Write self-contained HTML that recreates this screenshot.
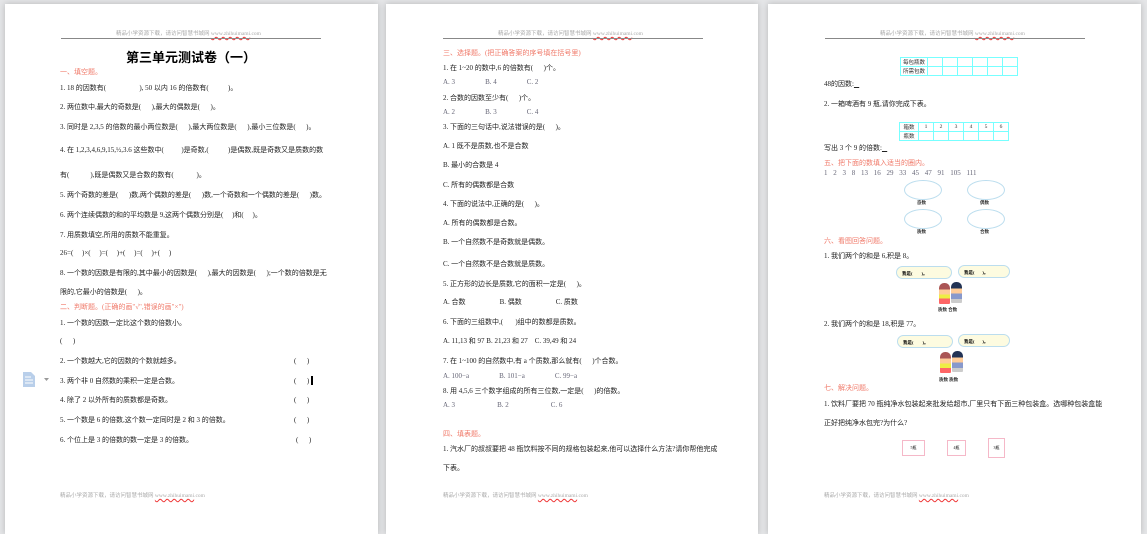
<!DOCTYPE html>
<html><head><meta charset="utf-8"><style>
body{margin:0;width:1147px;height:526px;background:#e4e5e7;position:relative;overflow:hidden;font-family:"Liberation Serif","Noto Sans CJK SC",sans-serif}
.pg{position:absolute;top:4px;height:530px;background:#fff;box-shadow:0 0 6px rgba(0,0,0,.2)}
.t{position:absolute;font-size:7px;line-height:8px;white-space:nowrap;color:#222}
.r{color:#f07a6a}
.h{color:#aaa;font-size:5.5px}
.hl{position:absolute;height:1px;background:#888}
.w{text-decoration:underline wavy #e33;text-decoration-thickness:0.5px}
.n{color:#667}
table{position:absolute;border-collapse:collapse;font-size:5.5px}
td{border:1px solid #7ff;height:7px;padding:0 1px;color:#333;text-align:center;width:12px}
.ov{position:absolute;width:36px;height:18px;border:1px solid #bde;border-radius:50%}
.lb{position:absolute;font-size:4.5px;font-weight:bold;color:#333}
.bub{position:absolute;height:13px;background:#fdfbe0;border:1px solid #bde;border-radius:7px;font-size:4.5px;line-height:13px;padding-left:5px;box-sizing:border-box;font-weight:bold}
.kid{position:absolute;width:11px;height:21px;border-radius:5px 5px 1px 1px}
.bx{position:absolute;border:1px solid #f5b8c8;font-size:4px;text-align:center;line-height:13px}
</style></head><body>
<div class="pg" style="left:5px;width:373px"></div>
<div class="pg" style="left:386px;width:372px"></div>
<div class="pg" style="left:768px;width:373px"></div>

<!-- page1 -->
<div class="t h" style="left:116px;top:30px">精品小学资源下载，请访问智慧书城网 <span class="w">www.zhihuimami</span>.com</div>
<div class="hl" style="left:61px;top:38px;width:260px"></div>
<div class="t" style="left:126px;top:51px;font-size:13px;line-height:14px;font-weight:bold;color:#000">第三单元测试卷（一）</div>
<div class="t r" style="left:60px;top:68px">一、填空题。</div>
<div class="t" style="left:60px;top:84px">1. 18 的因数有(&nbsp;&nbsp;&nbsp;&nbsp;&nbsp;&nbsp;&nbsp;&nbsp;&nbsp;&nbsp;&nbsp;&nbsp;&nbsp;&nbsp;&nbsp;&nbsp;&nbsp;&nbsp;&nbsp;), 50 以内 16 的倍数有(&nbsp;&nbsp;&nbsp;&nbsp;&nbsp;&nbsp;&nbsp;&nbsp;&nbsp;&nbsp;&nbsp;)。</div>
<div class="t" style="left:60px;top:103px">2. 两位数中,最大的奇数是(&nbsp;&nbsp;&nbsp;&nbsp;&nbsp;&nbsp;),最大的偶数是(&nbsp;&nbsp;&nbsp;&nbsp;&nbsp;&nbsp;)。</div>
<div class="t" style="left:60px;top:123px">3. 同时是 2,3,5 的倍数的最小两位数是(&nbsp;&nbsp;&nbsp;&nbsp;&nbsp;&nbsp;),最大两位数是(&nbsp;&nbsp;&nbsp;&nbsp;&nbsp;&nbsp;),最小三位数是(&nbsp;&nbsp;&nbsp;&nbsp;&nbsp;&nbsp;)。</div>
<div class="t" style="left:60px;top:146px">4. 在 1,2,3,4,6,9,15,½,3.6 这些数中(&nbsp;&nbsp;&nbsp;&nbsp;&nbsp;&nbsp;&nbsp;&nbsp;&nbsp;&nbsp;)是奇数,(&nbsp;&nbsp;&nbsp;&nbsp;&nbsp;&nbsp;&nbsp;&nbsp;&nbsp;&nbsp;&nbsp;)是偶数,既是奇数又是质数的数</div>
<div class="t" style="left:60px;top:171px">有(&nbsp;&nbsp;&nbsp;&nbsp;&nbsp;&nbsp;&nbsp;&nbsp;&nbsp;&nbsp;&nbsp;&nbsp;),既是偶数又是合数的数有(&nbsp;&nbsp;&nbsp;&nbsp;&nbsp;&nbsp;&nbsp;&nbsp;&nbsp;&nbsp;&nbsp;&nbsp;&nbsp;)。</div>
<div class="t" style="left:60px;top:191px">5. 两个奇数的差是(&nbsp;&nbsp;&nbsp;&nbsp;&nbsp;&nbsp;)数,两个偶数的差是(&nbsp;&nbsp;&nbsp;&nbsp;&nbsp;&nbsp;)数,一个奇数和一个偶数的差是(&nbsp;&nbsp;&nbsp;&nbsp;&nbsp;&nbsp;)数。</div>
<div class="t" style="left:60px;top:211px">6. 两个连续偶数的和的平均数是 9,这两个偶数分别是(&nbsp;&nbsp;&nbsp;&nbsp;&nbsp;)和(&nbsp;&nbsp;&nbsp;&nbsp;&nbsp;)。</div>
<div class="t" style="left:60px;top:231px">7. 用质数填空,所用的质数不能重复。</div>
<div class="t" style="left:60px;top:249px">26=(&nbsp;&nbsp;&nbsp;&nbsp;&nbsp;)×(&nbsp;&nbsp;&nbsp;&nbsp;&nbsp;)=(&nbsp;&nbsp;&nbsp;&nbsp;&nbsp;)+(&nbsp;&nbsp;&nbsp;&nbsp;&nbsp;)=(&nbsp;&nbsp;&nbsp;&nbsp;&nbsp;)+(&nbsp;&nbsp;&nbsp;&nbsp;&nbsp;)</div>
<div class="t" style="left:60px;top:269px">8. 一个数的因数是有限的,其中最小的因数是(&nbsp;&nbsp;&nbsp;&nbsp;&nbsp;&nbsp;),最大的因数是(&nbsp;&nbsp;&nbsp;&nbsp;&nbsp;&nbsp;);一个数的倍数是无</div>
<div class="t" style="left:60px;top:288px">限的,它最小的倍数是(&nbsp;&nbsp;&nbsp;&nbsp;&nbsp;&nbsp;)。</div>
<div class="t r" style="left:60px;top:303px">二、判断题。(正确的画"√",错误的画"×")</div>
<div class="t" style="left:60px;top:319px">1. 一个数的因数一定比这个数的倍数小。</div>
<div class="t" style="left:60px;top:337px">(&nbsp;&nbsp;&nbsp;&nbsp;&nbsp;&nbsp;)</div>
<div class="t" style="left:60px;top:357px">2. 一个数越大,它的因数的个数就越多。</div>
<div class="t" style="left:60px;top:377px">3. 两个非 0 自然数的乘积一定是合数。</div>
<div class="t" style="left:60px;top:396px">4. 除了 2 以外所有的质数都是奇数。</div>
<div class="t" style="left:60px;top:416px">5. 一个数是 6 的倍数,这个数一定同时是 2 和 3 的倍数。</div>
<div class="t" style="left:60px;top:436px">6. 个位上是 3 的倍数的数一定是 3 的倍数。</div>
<div class="t" style="left:294px;top:357px">(&nbsp;&nbsp;&nbsp;&nbsp;&nbsp;&nbsp;)</div>
<div class="t" style="left:294px;top:377px">(&nbsp;&nbsp;&nbsp;&nbsp;&nbsp;&nbsp;)</div>
<div style="position:absolute;left:311px;top:376px;width:2px;height:9px;background:#000"></div>
<div class="t" style="left:294px;top:396px">(&nbsp;&nbsp;&nbsp;&nbsp;&nbsp;&nbsp;)</div>
<div class="t" style="left:294px;top:416px">(&nbsp;&nbsp;&nbsp;&nbsp;&nbsp;&nbsp;)</div>
<div class="t" style="left:296px;top:436px">(&nbsp;&nbsp;&nbsp;&nbsp;&nbsp;&nbsp;)</div>
<div class="t h" style="left:60px;top:492px">精品小学资源下载，请访问智慧书城网 <span class="w">www.zhihuimami</span>.com</div>
<svg style="position:absolute;left:22px;top:372px" width="30" height="16"><path d="M1 0h8l4 4v11H1z" fill="#b9cfea"/><path d="M3 5h6M3 8h8M3 11h8" stroke="#fff" stroke-width="1"/><path d="M22 6h5l-2.5 3z" fill="#999"/></svg>

<!-- page2 -->
<div class="t h" style="left:498px;top:30px">精品小学资源下载，请访问智慧书城网 <span class="w">www.zhihuimami</span>.com</div>
<div class="hl" style="left:443px;top:38px;width:260px"></div>
<div class="t r" style="left:443px;top:49px">三、选择题。(把正确答案的序号填在括号里)</div>
<div class="t" style="left:443px;top:64px">1. 在 1~20 的数中,6 的倍数有(&nbsp;&nbsp;&nbsp;&nbsp;&nbsp;&nbsp;)个。</div>
<div class="t n" style="left:443px;top:78px">A. 3<span style="margin-left:30px">B. 4</span><span style="margin-left:30px">C. 2</span></div>
<div class="t" style="left:443px;top:94px">2. 合数的因数至少有(&nbsp;&nbsp;&nbsp;&nbsp;&nbsp;&nbsp;)个。</div>
<div class="t n" style="left:443px;top:108px">A. 2<span style="margin-left:30px">B. 3</span><span style="margin-left:30px">C. 4</span></div>
<div class="t" style="left:443px;top:123px">3. 下面的三句话中,说法错误的是(&nbsp;&nbsp;&nbsp;&nbsp;&nbsp;&nbsp;)。</div>
<div class="t" style="left:443px;top:142px">A. 1 既不是质数,也不是合数</div>
<div class="t" style="left:443px;top:161px">B. 最小的合数是 4</div>
<div class="t" style="left:443px;top:181px">C. 所有的偶数都是合数</div>
<div class="t" style="left:443px;top:200px">4. 下面的说法中,正确的是(&nbsp;&nbsp;&nbsp;&nbsp;&nbsp;&nbsp;)。</div>
<div class="t" style="left:443px;top:219px">A. 所有的偶数都是合数。</div>
<div class="t" style="left:443px;top:238px">B. 一个自然数不是奇数就是偶数。</div>
<div class="t" style="left:443px;top:260px">C. 一个自然数不是合数就是质数。</div>
<div class="t" style="left:443px;top:280px">5. 正方形的边长是质数,它的面积一定是(&nbsp;&nbsp;&nbsp;&nbsp;&nbsp;&nbsp;)。</div>
<div class="t" style="left:443px;top:298px">A. 合数<span style="margin-left:34px">B. 偶数</span><span style="margin-left:34px">C. 质数</span></div>
<div class="t" style="left:443px;top:318px">6. 下面的三组数中,(&nbsp;&nbsp;&nbsp;&nbsp;&nbsp;&nbsp;&nbsp;)组中的数都是质数。</div>
<div class="t" style="left:443px;top:337px">A. 11,13 和 97 B. 21,23 和 27&nbsp;&nbsp;&nbsp; C. 39,49 和 24</div>
<div class="t" style="left:443px;top:357px">7. 在 1~100 的自然数中,有 a 个质数,那么就有(&nbsp;&nbsp;&nbsp;&nbsp;&nbsp;&nbsp;)个合数。</div>
<div class="t n" style="left:443px;top:372px">A. 100−a<span style="margin-left:30px">B. 101−a</span><span style="margin-left:30px">C. 99−a</span></div>
<div class="t" style="left:443px;top:387px">8. 用 4,5,6 三个数字组成的所有三位数,一定是(&nbsp;&nbsp;&nbsp;&nbsp;&nbsp;&nbsp;)的倍数。</div>
<div class="t n" style="left:443px;top:401px">A. 3<span style="margin-left:42px">B. 2</span><span style="margin-left:42px">C. 6</span></div>
<div class="t r" style="left:443px;top:430px">四、填表题。</div>
<div class="t" style="left:443px;top:445px">1. 汽水厂的叔叔要把 48 瓶饮料按不同的规格包装起来,他可以选择什么方法?请你帮他完成</div>
<div class="t" style="left:443px;top:464px">下表。</div>
<div class="t h" style="left:443px;top:492px">精品小学资源下载，请访问智慧书城网 <span class="w">www.zhihuimami</span>.com</div>

<!-- page3 -->
<div class="t h" style="left:880px;top:30px">精品小学资源下载，请访问智慧书城网 <span class="w">www.zhihuimami</span>.com</div>
<div class="hl" style="left:825px;top:38px;width:260px"></div>
<table style="left:900px;top:57px"><tr><td style="width:24px">每包瓶数</td><td></td><td></td><td></td><td></td><td></td><td></td></tr><tr><td>所需包数</td><td></td><td></td><td></td><td></td><td></td><td></td></tr></table>
<div class="t" style="left:824px;top:80px">48的因数:<u>&nbsp;&nbsp;&nbsp;</u></div>
<div class="t" style="left:824px;top:100px">2. 一箱啤酒有 9 瓶,请你完成下表。</div>
<table style="left:899px;top:122px"><tr><td style="width:16px">箱数</td><td>1</td><td>2</td><td>3</td><td>4</td><td>5</td><td>6</td></tr><tr><td>瓶数</td><td></td><td></td><td></td><td></td><td></td><td></td></tr></table>
<div class="t" style="left:824px;top:144px">写出 3 个 9 的倍数:<u>&nbsp;&nbsp;&nbsp;</u></div>
<div class="t r" style="left:824px;top:159px">五、把下面的数填入适当的圈内。</div>
<div class="t n" style="left:824px;top:169px;word-spacing:4px">1 2 3 8 13 16 29 33 45 47 91 105 111</div>
<div class="ov" style="left:904px;top:180px"></div><div class="ov" style="left:967px;top:180px"></div>
<div class="lb" style="left:917px;top:200px">奇数</div><div class="lb" style="left:980px;top:200px">偶数</div>
<div class="ov" style="left:904px;top:209px"></div><div class="ov" style="left:967px;top:209px"></div>
<div class="lb" style="left:917px;top:229px">质数</div><div class="lb" style="left:980px;top:229px">合数</div>
<div class="t r" style="left:824px;top:237px">六、看图回答问题。</div>
<div class="t" style="left:824px;top:252px">1. 我们两个的和是 6,积是 8。</div>
<div class="bub" style="left:896px;top:266px;width:56px">我是(&nbsp;&nbsp;&nbsp;&nbsp;&nbsp;&nbsp;&nbsp;&nbsp;)。</div>
<div class="bub" style="left:958px;top:265px;width:52px">我是(&nbsp;&nbsp;&nbsp;&nbsp;&nbsp;&nbsp;&nbsp;)。</div>
<div class="kid" style="left:939px;top:283px;background:linear-gradient(#a55 0 30%,#fc9 30% 55%,#ee4 55% 75%,#f66 75%)"></div>
<div class="kid" style="left:951px;top:282px;background:linear-gradient(#235 0 30%,#fc9 30% 55%,#89c 55% 80%,#ccc 80%)"></div>
<div class="lb" style="left:938px;top:307px">质数 合数</div>
<div class="t" style="left:824px;top:320px">2. 我们两个的和是 18,积是 77。</div>
<div class="bub" style="left:897px;top:335px;width:56px">我是(&nbsp;&nbsp;&nbsp;&nbsp;&nbsp;&nbsp;&nbsp;&nbsp;)。</div>
<div class="bub" style="left:958px;top:334px;width:52px">我是(&nbsp;&nbsp;&nbsp;&nbsp;&nbsp;&nbsp;&nbsp;)。</div>
<div class="kid" style="left:940px;top:352px;background:linear-gradient(#a55 0 30%,#fc9 30% 55%,#ee4 55% 75%,#f66 75%)"></div>
<div class="kid" style="left:952px;top:351px;background:linear-gradient(#235 0 30%,#fc9 30% 55%,#89c 55% 80%,#ccc 80%)"></div>
<div class="lb" style="left:939px;top:377px">质数 质数</div>
<div class="t r" style="left:824px;top:384px">七、解决问题。</div>
<div class="t" style="left:824px;top:400px">1. 饮料厂要把 70 瓶纯净水包装起来批发给超市,厂里只有下面三种包装盒。选哪种包装盒能</div>
<div class="t" style="left:824px;top:419px">正好把纯净水包完?为什么?</div>
<div class="bx" style="left:902px;top:440px;width:21px;height:14px">5瓶</div>
<div class="bx" style="left:947px;top:440px;width:17px;height:14px">4瓶</div>
<div class="bx" style="left:988px;top:438px;width:15px;height:18px;line-height:18px">3瓶</div>
<div class="t h" style="left:824px;top:492px">精品小学资源下载，请访问智慧书城网 <span class="w">www.zhihuimami</span>.com</div>
</body></html>
